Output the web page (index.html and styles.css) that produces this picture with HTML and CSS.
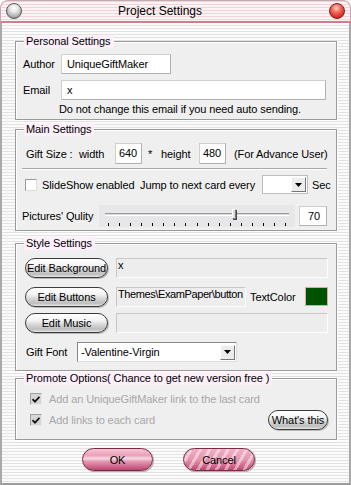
FILE: index.html
```html
<!DOCTYPE html>
<html>
<head>
<meta charset="utf-8">
<link rel="stylesheet" href="styles.css">
</head>
<body>
<div class="window">
  <div class="titlebar">
    <span class="orb orb-gray"></span>
    <span class="title">Project Settings</span>
    <span class="orb orb-red"></span>
  </div>
  <div class="body">
    <section class="group g-personal">
      <span class="legend">Personal Settings</span>
      <div class="row">
        <span class="lbl">Author</span>
        <div class="field f-author">UniqueGiftMaker</div>
      </div>
      <div class="row row-email">
        <span class="lbl">Email</span>
        <div class="field f-email">x</div>
      </div>
      <div class="note">Do not change this email if you need auto sending.</div>
    </section>

    <section class="group g-main">
      <span class="legend">Main Settings</span>
      <div class="row size-row">
        <span class="t-gift">Gift Size :</span>
        <span class="t-width">width</span>
        <div class="field f-num">640</div>
        <span class="t-star">*</span>
        <span class="t-height">height</span>
        <div class="field f-num">480</div>
        <span class="t-adv">(For Advance User)</span>
      </div>
      <div class="separator"></div>
      <div class="row slide-row">
        <span class="checkbox"></span>
        <span class="t-slide">SlideShow enabled</span>
        <span class="t-jump">Jump to next card every</span>
        <div class="combo"><span class="combo-val"></span><span class="drop"><svg width="7" height="4" viewBox="0 0 7 4"><path d="M0 0H7L3.5 4Z" fill="#000"/></svg></span></div>
        <span class="t-sec">Sec</span>
      </div>
      <div class="row quality-row">
        <span class="t-quality">Pictures' Qulity</span>
        <div class="slider">
          <div class="track"></div>
          <div class="thumb"></div>
          <div class="ticks">
            <i></i><i></i><i></i><i></i><i></i><i></i><i></i><i></i><i></i><i></i><i></i><i></i><i></i><i></i><i></i><i></i><i></i>
          </div>
        </div>
        <div class="field f-q">70</div>
      </div>
    </section>

    <section class="group g-style">
      <span class="legend">Style Settings</span>
      <div class="row srow srow1">
        <button class="pill silver b-edit">Edit Background</button>
        <div class="gfield gf-wide">x</div>
      </div>
      <div class="row srow srow2">
        <button class="pill silver b-edit">Edit Buttons</button>
        <div class="gfield gf-short">Themes\ExamPaper\button</div>
        <span class="t-color">TextColor</span>
        <span class="swatch"></span>
      </div>
      <div class="row srow srow3">
        <button class="pill silver b-edit">Edit Music</button>
        <div class="gfield gf-wide"></div>
      </div>
      <div class="row srow srow4">
        <span class="t-font">Gift Font</span>
        <div class="select"><span class="sel-val">-Valentine-Virgin</span><span class="drop"><svg width="7" height="4" viewBox="0 0 7 4"><path d="M0 0H7L3.5 4Z" fill="#000"/></svg></span></div>
      </div>
    </section>

    <section class="group g-promote">
      <span class="legend">Promote Options( Chance to get new version free )</span>
      <div class="row prow1">
        <span class="checkbox checked"><svg width="8" height="7" viewBox="0 0 8 7"><path d="M0.5 3.2 L3 5.6 L7.5 0.8" stroke="#111" stroke-width="1.8" fill="none"/></svg></span>
        <span class="t-dis">Add an UniqueGiftMaker link to the last card</span>
      </div>
      <div class="row prow2">
        <span class="checkbox checked"><svg width="8" height="7" viewBox="0 0 8 7"><path d="M0.5 3.2 L3 5.6 L7.5 0.8" stroke="#111" stroke-width="1.8" fill="none"/></svg></span>
        <span class="t-dis">Add links to each card</span>
        <button class="pill silver b-what">What's this</button>
      </div>
    </section>

    <div class="actions">
      <button class="pill pink b-ok">OK</button>
      <button class="pill pink striped b-cancel">Cancel</button>
    </div>
  </div>
</div>
</body>
</html>
```

FILE: styles.css
```css
* { box-sizing: border-box; }
html, body { margin: 0; padding: 0; }
body {
  width: 351px;
  height: 485px;
  font-family: "Liberation Sans", Arial, sans-serif;
  font-size: 11px;
  letter-spacing: -0.1px;
  color: #000;
  background: #fff;
  overflow: hidden;
}
.window {
  width: 351px;
  height: 485px;
  display: flex;
  flex-direction: column;
}
.titlebar {
  height: 23px;
  flex: none;
  display: flex;
  align-items: center;
  border-radius: 8px 8px 0 0;
  border: 1px solid #c8a8b0;
  border-bottom: 2px solid #d87a8c;
  background: repeating-linear-gradient(to bottom, #f3d2d9 0 1px, #fdf4f6 1px 3px);
  padding: 0 4px 0 4px;
}
.orb {
  width: 16px;
  height: 16px;
  border-radius: 50%;
  flex: none;
}
.orb-gray {
  margin-left: 1px;
  border: 1px solid #555;
  background: radial-gradient(circle at 50% 30%, #ffffff 0, #e4e4e4 35%, #9a9a9a 80%, #6a6a6a 100%);
}
.orb-red {
  margin-left: auto;
  margin-right: 1px;
  border: 1px solid #7a2020;
  background: radial-gradient(circle at 45% 30%, #ffd0c8 0, #f06a5a 35%, #d02a22 75%, #8a1010 100%);
}
.title {
  margin-left: 96px;
  font-size: 12px;
  line-height: 14px;
  letter-spacing: 0;
}
.body {
  flex: 1;
  border-left: 2px solid #a8a8a8;
  border-right: 2px solid #a8a8a8;
  border-bottom: 2px solid #9c9c9c;
  background: repeating-linear-gradient(to bottom, #fbfbfb 0 2px, #e2e2e2 2px 3px);
  padding: 0 13px;
}
.group {
  position: relative;
  width: 322px;
  border: 1px solid #9a9a9a;
  box-shadow: inset 1px 1px 0 #fff, 1px 1px 0 #fff;
  background: #efefef;
}
.legend {
  position: absolute;
  top: -7px;
  left: 8px;
  background: #fdf0fb;
  padding: 0 3px 0 2px;
  line-height: 13px;
  white-space: nowrap;
}
.row { display: flex; align-items: center; white-space: nowrap; }
.row > * { flex: none; }

/* Personal */
.g-personal { margin-top: 18px; height: 79px; padding-top: 12px; }
.g-personal .row { padding-left: 7px; height: 20px; }
.row-email { margin-top: 6px; }
.lbl { width: 38px; }
.field {
  background: #fff;
  border: 1px solid #cfcfcf;
  border-right-color: #b0b0b0;
  border-bottom-color: #b0b0b0;
  height: 20px;
  line-height: 18px;
  padding-left: 5px;
}
.f-author { width: 110px; }
.f-email { width: 265px; }
.note { padding-left: 43px; margin-top: 2px; line-height: 14px; white-space: nowrap; }

/* Main */
.g-main { margin-top: 9px; height: 102px; padding-top: 13px; }
.size-row { height: 21px; padding-left: 10px; }
.t-gift { width: 53px; }
.t-width { width: 36px; }
.f-num { width: 27px; height: 21px; padding-left: 3px; line-height: 19px; }
.t-star { width: 19px; padding-left: 6px; }
.t-height { width: 38px; }
.t-adv { margin-left: 8px; }
.separator {
  margin: 4px 9px 0 6px;
  height: 2px;
  border-top: 1px solid #a8a8a8;
  border-bottom: 1px solid #fff;
}
.slide-row { margin-top: 5px; height: 19px; padding-left: 9px; }
.checkbox {
  width: 12px;
  height: 12px;
  background: #fff;
  border: 1px solid #9a9a9a;
  border-right-color: #dcdcdc;
  border-bottom-color: #dcdcdc;
  display: flex;
  align-items: center;
  justify-content: center;
}
.checkbox.checked { background: #d6d6d6; border-color: #a0a0a0 #e8e8e8 #e8e8e8 #a0a0a0; }
.t-slide { margin-left: 5px; width: 98px; }
.t-jump { width: 122px; }
.combo {
  width: 46px;
  height: 19px;
  background: #fff;
  border: 1px solid #bdbdbd;
  display: flex;
  justify-content: flex-end;
  padding: 1px;
}
.drop {
  width: 15px;
  height: 15px;
  background: #ececec;
  border: 1px solid #fff;
  border-right-color: #777;
  border-bottom-color: #777;
  display: flex;
  align-items: center;
  justify-content: center;
}
.t-sec { margin-left: 4px; }
.quality-row { margin-top: 10px; height: 23px; padding-left: 6px; }
.t-quality { width: 77px; }
.slider {
  position: relative;
  width: 196px;
  height: 22px;
  background: #e7e7e9;
}
.track {
  position: absolute;
  left: 6px;
  right: 6px;
  top: 8px;
  height: 3px;
  border-top: 1px solid #9a9a9a;
  border-bottom: 1px solid #fff;
  background: #d8d8d8;
}
.thumb {
  position: absolute;
  left: 133px;
  top: 4px;
  width: 4px;
  height: 10px;
  border: 1px solid #808080;
  border-left-color: #fff;
  border-top-color: #fff;
  background: #dcdcdc;
  box-shadow: 1px 1px 0 #444;
}
.ticks {
  position: absolute;
  left: 9px;
  right: 9px;
  top: 18px;
  height: 3px;
  display: flex;
  justify-content: space-between;
}
.ticks i { width: 1px; height: 3px; background: #000; }
.f-q { width: 28px; height: 20px; margin-left: 4px; padding-left: 8px; }

/* Style */
.g-style { margin-top: 12px; height: 128px; padding-top: 14px; }
.srow { padding-left: 9px; height: 20px; }
.srow2 { margin-top: 9px; height: 19px; }
.srow3 { margin-top: 7px; }
.srow4 { margin-top: 9px; padding-left: 10px; }
.pill {
  font-family: "Liberation Sans", Arial, sans-serif;
  font-size: 11px;
  letter-spacing: -0.1px;
  color: #000;
  border-radius: 10px;
  padding: 0;
  cursor: default;
  white-space: nowrap;
}
.silver {
  border: 1px solid #3c3c3c;
  background: linear-gradient(to bottom, #ffffff 0%, #f4f4f4 35%, #d6d6d6 60%, #bdbdbd 85%, #e8e8e8 100%);
  box-shadow: inset 0 1px 0 #fff, 1px 1px 0 #b8b8b8;
}
.b-edit { width: 83px; height: 20px; line-height: 18px; }
.gfield {
  margin-left: 8px;
  height: 20px;
  background: #ededed;
  border: 1px solid #c8c8c8;
  border-right-color: #fdfdfd;
  border-bottom-color: #fdfdfd;
  padding: 0 0 0 1px;
  line-height: 13px;
  overflow: hidden;
  white-space: nowrap;
}
.gf-wide { width: 212px; }
.gf-short { width: 130px; letter-spacing: -0.4px; }
.t-color { margin-left: 4px; width: 55px; }
.swatch {
  width: 23px;
  height: 19px;
  border: 1px solid #e7a0b0;
  background: #005200;
}
.t-font { width: 51px; }
.select {
  width: 160px;
  height: 20px;
  background: #fff;
  border: 1px solid #888;
  border-right-color: #ddd;
  border-bottom-color: #ddd;
  display: flex;
  align-items: center;
  padding: 1px;
}
.sel-val { flex: 1; padding-left: 2px; }

/* Promote */
.g-promote { margin-top: 7px; height: 62px; padding-top: 14px; }
.prow1 { padding-left: 14px; height: 12px; }
.prow2 { padding-left: 14px; height: 12px; margin-top: 9px; }
.t-dis { margin-left: 7px; color: #a8a8a8; }
.b-what {
  margin-left: auto;
  margin-right: 8px;
  width: 60px;
  height: 20px;
  line-height: 18px;
  border-radius: 10px;
}

/* Actions */
.actions { margin-top: 8px; display: flex; padding-left: 67px; gap: 30px; }
.pink {
  height: 23px;
  border: 1px solid #7c2848;
  border-radius: 12px;
  background: linear-gradient(to bottom, #f5c6d5 0%, #eaa0b8 30%, #f6d6e0 45%, #e496b0 60%, #c85a80 90%, #b04870 100%);
  box-shadow: 1px 1px 0 #b0b0b0;
}
.striped {
  background:
    repeating-linear-gradient(120deg, rgba(255,255,255,0) 0 5px, rgba(255,255,255,0.45) 5px 8px),
    linear-gradient(to bottom, #f0b0c4 0%, #e496b0 50%, #c85a80 90%, #b04870 100%);
}
.b-ok { width: 71px; }
.b-cancel { width: 72px; }
```
